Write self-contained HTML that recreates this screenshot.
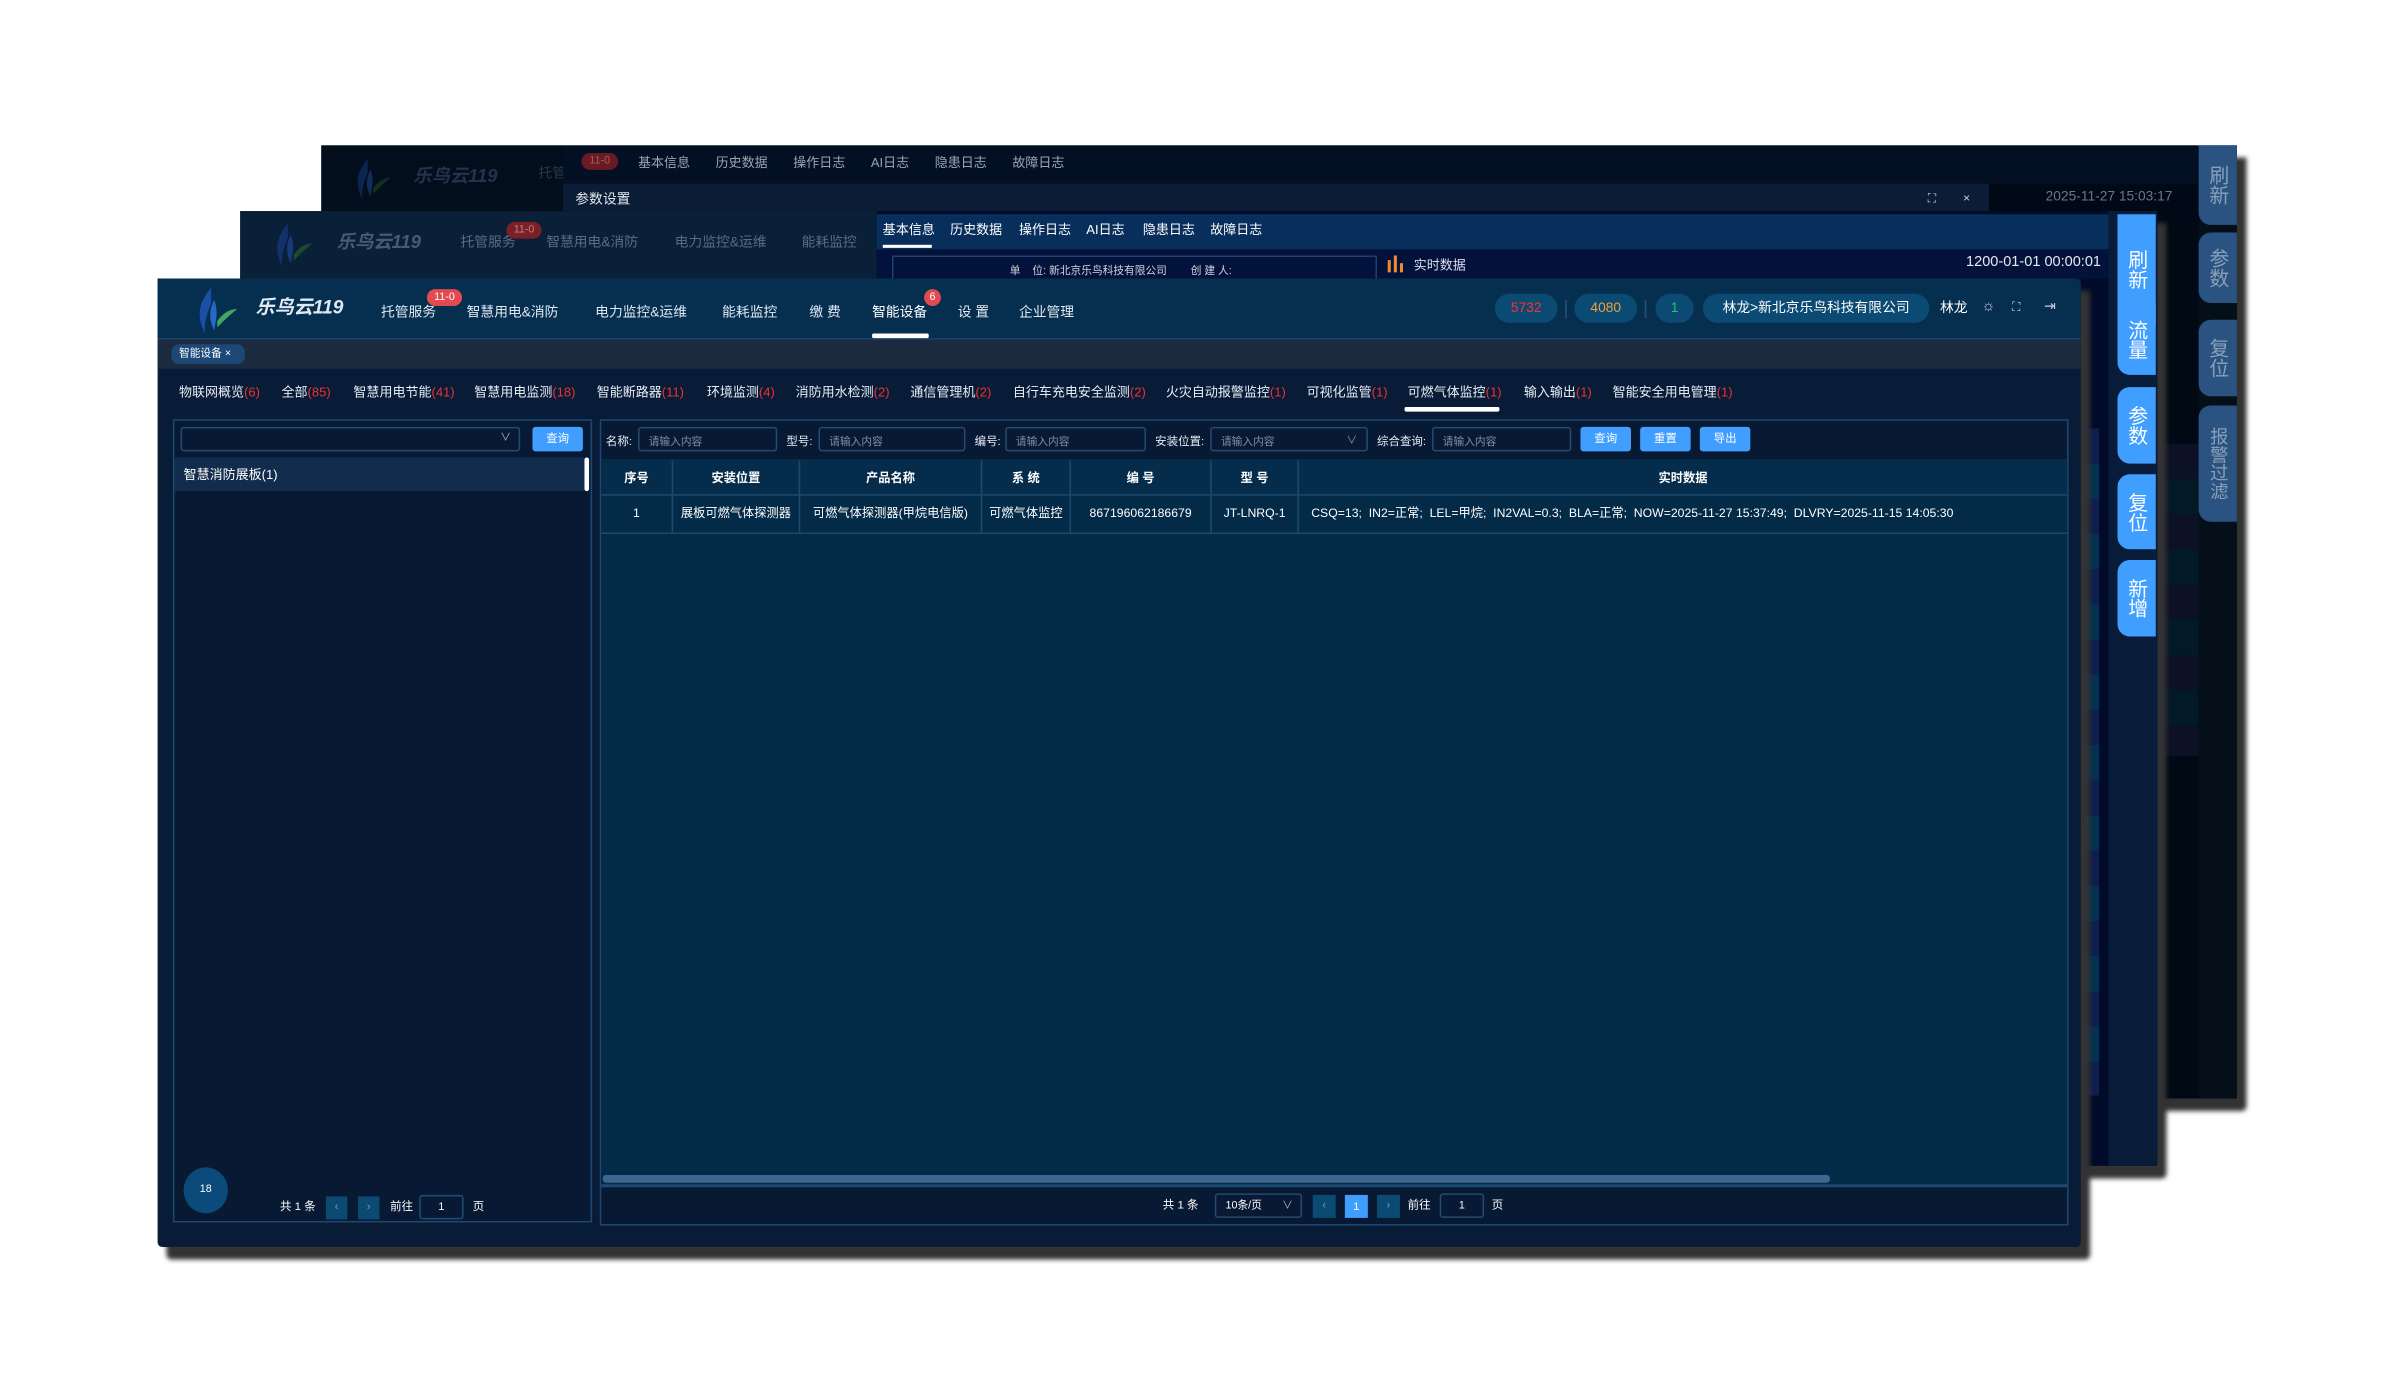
<!DOCTYPE html>
<html><head><meta charset="utf-8">
<style>
*{box-sizing:border-box;margin:0;padding:0}
html,body{width:2399px;height:1400px;background:#fff;overflow:hidden}
body{font-family:"Liberation Sans","Noto Sans CJK SC",sans-serif;color:#fff}
#s{position:absolute;left:0;top:0;width:1568px;height:915px;transform:scale(1.530);transform-origin:0 0}
.a{position:absolute}
.t{position:absolute;white-space:nowrap;line-height:1}
.win{position:absolute;box-shadow:6px 8px 3px #333;border-radius:0 0 3px 3px}
.cat{position:absolute;top:250px;font-size:8.5px;white-space:nowrap;color:#e8eef5}
.cat i{font-style:normal;color:#f03030}
.inp{position:absolute;height:16px;border:1px solid #244a70;border-radius:2px;background:#081a33;font-size:7px;color:#7e8fa3;padding:4px 0 0 6px;white-space:nowrap}
.btn{position:absolute;height:16px;background:#409eff;border-radius:2px;font-size:7.5px;color:#fff;text-align:center;line-height:16px}
.lbl{position:absolute;font-size:7.5px;color:#e6edf5;white-space:nowrap}
.th,.td{position:absolute;font-size:8px;text-align:center;white-space:nowrap}
.th{top:301px;height:23px;line-height:23px;font-weight:bold;border-right:1px solid #1d4a72}
.td{top:324px;height:24px;line-height:24px;border-right:1px solid #1d4a72}
.sb{position:absolute;width:25px;border-radius:8px 0 0 8px;font-size:13px;line-height:15px;text-align:center;writing-mode:vertical-rl;display:flex;align-items:center;justify-content:center}
.pill{position:absolute;top:192px;height:19px;border-radius:10px;background:#0a4a73;font-size:9px;line-height:19px;text-align:center}
.nav{position:absolute;top:197px;font-size:9px;color:#dfe8f2;white-space:nowrap}
</style></head><body><div id="s">

<!-- Window 3 (back) -->
<div class="win" style="left:210px;top:95px;width:1252px;height:623px;background:#000914"></div>
<div class="a" style="left:210px;top:95px;width:158px;height:45px;background:#020e1c"></div>
<svg class="a" style="left:228px;top:100px" width="30" height="34" viewBox="0 0 34 34"><path d="M14 2 C6 12 4 20 10 32 C9 24 12 18 14 12 Z" fill="#0c2450"/><path d="M16 10 C12 18 13 24 16 30 C17 24 19 18 16 10 Z" fill="#0f2c5c"/><path d="M18 24 C22 18 27 16 31 16 C26 20 22 24 18 28 Z" fill="#123020"/></svg>
<div class="t" style="left:270px;top:109px;font-size:12px;font-weight:bold;font-style:italic;color:#25334a">乐鸟云119</div>
<div class="t" style="left:352px;top:109px;font-size:9px;color:#2a3848">托管服务</div>
<div class="a" style="left:368px;top:95px;width:1068px;height:25px;background:#031024"></div>
<div class="a" style="left:380px;top:100px;width:24px;height:11px;border-radius:6px;background:#6a1a22;font-size:7px;color:#a06060;text-align:center;line-height:11px">11-0</div>
<div class="t" style="left:417px;top:102px;font-size:8.5px;color:#9aa5b3;word-spacing:6px">基本信息&nbsp; 历史数据&nbsp; 操作日志&nbsp; AI日志&nbsp; 隐患日志&nbsp; 故障日志</div>
<div class="a" style="left:368px;top:120px;width:932px;height:25px;background:#0a1c36"></div>
<div class="t" style="left:376px;top:126px;font-size:9px;color:#e4e9ef">参数设置</div>
<div class="t" style="left:1260px;top:126px;font-size:8px;color:#ccd">⛶</div>
<div class="t" style="left:1283px;top:126px;font-size:8px;color:#ccd">×</div>
<div class="a" style="left:1300px;top:120px;width:137px;height:25px;background:#000a16"></div>
<div class="t" style="left:1337px;top:124px;font-size:9px;color:#6d7785">2025-11-27 15:03:17</div>
<div class="a" style="left:1410px;top:290px;width:27px;height:204px;background:repeating-linear-gradient(#0c1126 0 23px,#021926 23px 46px)"></div>
<div class="a" style="left:1437px;top:95px;width:25px;height:623px;background:#040f1a"></div>
<div class="sb" style="left:1437px;top:95px;height:52px;background:#2b5382;color:#8aa0b8;border-radius:0 0 0 8px">刷新</div>
<div class="sb" style="left:1437px;top:152px;height:46px;background:#2b5382;color:#8aa0b8">参数</div>
<div class="sb" style="left:1437px;top:209px;height:50px;background:#2b5382;color:#8aa0b8">复位</div>
<div class="sb" style="left:1437px;top:265px;height:76px;background:#2b5382;color:#8aa0b8;font-size:12px;line-height:13px">报警过滤</div>

<!-- Window 2 -->
<div class="win" style="left:157px;top:138px;width:1253px;height:624px;background:#000b2a"></div>
<div class="a" style="left:157px;top:138px;width:416px;height:44px;background:#0a1f38"></div>
<svg class="a" style="left:175px;top:142px" width="32" height="36" viewBox="0 0 34 34"><path d="M14 2 C6 12 4 20 10 32 C9 24 12 18 14 12 Z" fill="#12306a"/><path d="M16 10 C12 18 13 24 16 30 C17 24 19 18 16 10 Z" fill="#163a78"/><path d="M18 24 C22 18 27 16 31 16 C26 20 22 24 18 28 Z" fill="#1c4a30"/></svg>
<div class="t" style="left:220px;top:152px;font-size:12px;font-weight:bold;font-style:italic;color:#4a5a70">乐鸟云119</div>
<div class="t" style="left:301px;top:154px;font-size:9px;color:#5b6b80">托管服务</div>
<div class="a" style="left:331px;top:145px;width:23px;height:11px;border-radius:6px;background:#7a2028;font-size:7px;color:#c08080;text-align:center;line-height:11px">11-0</div>
<div class="t" style="left:357px;top:154px;font-size:9px;color:#5b6b80">智慧用电&amp;消防</div>
<div class="t" style="left:441px;top:154px;font-size:9px;color:#5b6b80">电力监控&amp;运维</div>
<div class="t" style="left:524px;top:154px;font-size:9px;color:#5b6b80">能耗监控</div>
<div class="a" style="left:573px;top:140px;width:811px;height:23px;background:#082e5c"></div>
<div class="t" style="left:577px;top:146px;font-size:8.5px;color:#fff">基本信息</div>
<div class="a" style="left:577px;top:160px;width:32px;height:2px;background:#fff"></div>
<div class="t" style="left:621px;top:146px;font-size:8.5px;color:#fff">历史数据</div>
<div class="t" style="left:666px;top:146px;font-size:8.5px;color:#fff">操作日志</div>
<div class="t" style="left:710px;top:146px;font-size:8.5px;color:#fff">AI日志</div>
<div class="t" style="left:747px;top:146px;font-size:8.5px;color:#fff">隐患日志</div>
<div class="t" style="left:791px;top:146px;font-size:8.5px;color:#fff">故障日志</div>
<div class="a" style="left:573px;top:163px;width:811px;height:19px;background:#02123a"></div>
<div class="a" style="left:583px;top:167px;width:317px;height:15px;border:1px solid #1f3f70;border-bottom:none"></div>
<div class="t" style="left:660px;top:174px;font-size:7px;color:#cfd6e0">单 &nbsp;&nbsp; 位: 新北京乐鸟科技有限公司 &nbsp;&nbsp;&nbsp;&nbsp;&nbsp;&nbsp; 创 建 人:</div>
<div class="a" style="left:907px;top:170px;width:2px;height:8px;background:#f08a30"></div>
<div class="a" style="left:911px;top:167px;width:2px;height:11px;background:#f08a30"></div>
<div class="a" style="left:915px;top:172px;width:2px;height:6px;background:#f08a30"></div>
<div class="t" style="left:924px;top:169px;font-size:8.5px;color:#dde">实时数据</div>
<div class="t" style="left:1285px;top:167px;font-size:9.5px;color:#e6eaf0">1200-01-01 00:00:01</div>
<div class="a" style="left:1360px;top:280px;width:12px;height:436px;background:repeating-linear-gradient(#0f1e4e 0 23px,#023250 23px 46px)"></div>
<div class="t" style="left:1358px;top:535px;font-size:5px;color:#8899aa">80/</div>
<div class="a" style="left:1378px;top:138px;width:32px;height:624px;background:#081b38"></div>
<div class="sb" style="left:1384px;top:140px;height:72px;background:#409eff;color:#fff;border-radius:0 0 0 8px">刷新</div>
<div class="sb" style="left:1384px;top:198px;height:47px;background:#409eff;color:#fff">流量</div>
<div class="sb" style="left:1384px;top:253px;height:50px;background:#409eff;color:#fff">参数</div>
<div class="sb" style="left:1384px;top:310px;height:49px;background:#409eff;color:#fff">复位</div>
<div class="sb" style="left:1384px;top:366px;height:50px;background:#409eff;color:#fff">新增</div>

<!-- Front window -->
<div class="win" style="left:103px;top:182px;width:1257px;height:633px;background:#081b37"></div>
<div class="a" style="left:103px;top:182px;width:1257px;height:40px;background:#062f4f;border-bottom:1px solid #1a4a75;border-radius:4px 4px 0 0"></div>
<svg class="a" style="left:124px;top:186px" width="34" height="34" viewBox="0 0 34 34"><path d="M14 2 C6 12 4 20 10 32 C9 24 12 18 14 12 Z" fill="#1a4fa8"/><path d="M16 10 C12 18 13 24 16 30 C17 24 19 18 16 10 Z" fill="#2468c8"/><path d="M18 24 C22 18 27 16 31 16 C26 20 22 24 18 28 Z" fill="#3da860"/></svg>
<div class="t" style="left:167px;top:195px;font-size:12.5px;font-weight:bold;font-style:italic;color:#dfe8f4">乐鸟云119</div>
<div class="nav" style="left:249px">托管服务</div>
<div class="a" style="left:279px;top:189px;width:23px;height:11px;border-radius:6px;background:#e24a50;font-size:7px;text-align:center;line-height:11px">11-0</div>
<div class="nav" style="left:305px">智慧用电&amp;消防</div>
<div class="nav" style="left:389px">电力监控&amp;运维</div>
<div class="nav" style="left:472px">能耗监控</div>
<div class="nav" style="left:529px">缴 费</div>
<div class="nav" style="left:570px;color:#fff">智能设备</div>
<div class="a" style="left:604px;top:189px;width:11px;height:11px;border-radius:6px;background:#e24a50;font-size:7px;text-align:center;line-height:11px">6</div>
<div class="a" style="left:570px;top:218px;width:37px;height:3px;background:#fff;border-radius:1px"></div>
<div class="nav" style="left:626px">设 置</div>
<div class="nav" style="left:666px">企业管理</div>
<div class="pill" style="left:977px;width:41px;color:#ff3030">5732</div>
<div class="a" style="left:1023px;top:196px;width:1px;height:12px;background:#2a5070"></div>
<div class="pill" style="left:1029px;width:41px;color:#f0a040">4080</div>
<div class="a" style="left:1075px;top:196px;width:1px;height:12px;background:#2a5070"></div>
<div class="pill" style="left:1082px;width:25px;color:#20c080">1</div>
<div class="pill" style="left:1113px;width:148px;color:#fff">林龙&gt;新北京乐鸟科技有限公司</div>
<div class="t" style="left:1268px;top:197px;font-size:9px">林龙</div>
<div class="t" style="left:1295px;top:196px;font-size:10px;color:#ccd">☼</div>
<div class="t" style="left:1315px;top:197px;font-size:8px;color:#ccd">⛶</div>
<div class="t" style="left:1336px;top:196px;font-size:9px;color:#ccd">⇥</div>

<div class="a" style="left:103px;top:222px;width:1257px;height:19px;background:#1c2a40"></div>
<div class="a" style="left:112px;top:225px;width:48px;height:13px;background:#1c4877;border-radius:5px;font-size:7px;line-height:13px;padding-left:5px">智能设备 ×</div>

<div class="cat" style="left:117px">物联网概览<i>(6)</i></div>
<div class="cat" style="left:184px">全部<i>(85)</i></div>
<div class="cat" style="left:231px">智慧用电节能<i>(41)</i></div>
<div class="cat" style="left:310px">智慧用电监测<i>(18)</i></div>
<div class="cat" style="left:390px">智能断路器<i>(11)</i></div>
<div class="cat" style="left:462px">环境监测<i>(4)</i></div>
<div class="cat" style="left:520px">消防用水检测<i>(2)</i></div>
<div class="cat" style="left:595px">通信管理机<i>(2)</i></div>
<div class="cat" style="left:662px">自行车充电安全监测<i>(2)</i></div>
<div class="cat" style="left:762px">火灾自动报警监控<i>(1)</i></div>
<div class="cat" style="left:854px">可视化监管<i>(1)</i></div>
<div class="cat" style="left:920px">可燃气体监控<i>(1)</i></div>
<div class="a" style="left:918px;top:266px;width:62px;height:3px;background:#fff;border-radius:1px"></div>
<div class="cat" style="left:996px">输入输出<i>(1)</i></div>
<div class="cat" style="left:1054px">智能安全用电管理<i>(1)</i></div>

<!-- left panel -->
<div class="a" style="left:113px;top:274px;width:274px;height:525px;background:#081a33;border:1px solid #1d4870"></div>
<div class="inp" style="left:118px;top:279px;width:222px;height:16px"></div>
<div class="t" style="left:327px;top:283px;font-size:7px;color:#aab">∨</div>
<div class="btn" style="left:348px;top:279px;width:33px">查询</div>
<div class="a" style="left:114px;top:299px;width:268px;height:22px;background:#112c4c"></div>
<div class="t" style="left:120px;top:306px;font-size:8.5px">智慧消防展板(1)</div>
<div class="a" style="left:382px;top:299px;width:3px;height:22px;background:#fff;border-radius:2px"></div>
<div class="a" style="left:120px;top:763px;width:29px;height:30px;border-radius:50%;background:#0b4a7a;font-size:7px;text-align:center;line-height:30px">18</div>
<div class="t" style="left:183px;top:785px;font-size:7.5px">共 1 条</div>
<div class="a" style="left:213px;top:782px;width:14px;height:15px;background:#0b4a73;font-size:7px;color:#7aa;text-align:center;line-height:15px">‹</div>
<div class="a" style="left:234px;top:782px;width:14px;height:15px;background:#0b4a73;font-size:7px;color:#7aa;text-align:center;line-height:15px">›</div>
<div class="t" style="left:255px;top:785px;font-size:7.5px">前往</div>
<div class="a" style="left:274px;top:781px;width:29px;height:16px;border:1px solid #244a70;border-radius:2px;font-size:7px;text-align:center;line-height:15px">1</div>
<div class="t" style="left:309px;top:785px;font-size:7.5px">页</div>

<!-- right panel -->
<div class="a" style="left:392px;top:274px;width:960px;height:527px;background:#081a33;border:1px solid #1d4870"></div>
<div class="lbl" style="left:396px;top:283px">名称:</div>
<div class="inp" style="left:417px;top:279px;width:91px">请输入内容</div>
<div class="lbl" style="left:514px;top:283px">型号:</div>
<div class="inp" style="left:535px;top:279px;width:96px">请输入内容</div>
<div class="lbl" style="left:637px;top:283px">编号:</div>
<div class="inp" style="left:657px;top:279px;width:92px">请输入内容</div>
<div class="lbl" style="left:755px;top:283px">安装位置:</div>
<div class="inp" style="left:791px;top:279px;width:103px">请输入内容<span style="position:absolute;right:6px;top:3px">∨</span></div>
<div class="lbl" style="left:900px;top:283px">综合查询:</div>
<div class="inp" style="left:936px;top:279px;width:91px">请输入内容</div>
<div class="btn" style="left:1033px;top:279px;width:33px">查询</div>
<div class="btn" style="left:1072px;top:279px;width:33px">重置</div>
<div class="btn" style="left:1111px;top:279px;width:33px">导出</div>

<div class="a" style="left:393px;top:300px;width:958px;height:474px;background:#032a47;border-top:1px solid #1d4a72"></div>
<div class="a" style="left:393px;top:300px;width:958px;height:24px;background:#052c4b;border-bottom:1px solid #1d4a72"></div>
<div class="a" style="left:393px;top:348px;width:958px;height:1px;background:#1d4a72"></div>
<div class="th" style="left:393px;width:47px">序号</div>
<div class="th" style="left:440px;width:83px">安装位置</div>
<div class="th" style="left:523px;width:119px">产品名称</div>
<div class="th" style="left:642px;width:58px">系 统</div>
<div class="th" style="left:700px;width:92px">编 号</div>
<div class="th" style="left:792px;width:57px">型 号</div>
<div class="th" style="left:849px;width:502px;border:none">实时数据</div>
<div class="td" style="left:393px;width:47px">1</div>
<div class="td" style="left:440px;width:83px">展板可燃气体探测器</div>
<div class="td" style="left:523px;width:119px">可燃气体探测器(甲烷电信版)</div>
<div class="td" style="left:642px;width:58px">可燃气体监控</div>
<div class="td" style="left:700px;width:92px">867196062186679</div>
<div class="td" style="left:792px;width:57px">JT-LNRQ-1</div>
<div class="td" style="left:849px;width:502px;border:none;text-align:left;padding-left:8px">CSQ=13;&nbsp; IN2=正常;&nbsp; LEL=甲烷;&nbsp; IN2VAL=0.3;&nbsp; BLA=正常;&nbsp; NOW=2025-11-27 15:37:49;&nbsp; DLVRY=2025-11-15 14:05:30</div>
<div class="a" style="left:394px;top:768px;width:802px;height:5px;background:#3d6790;border-radius:2px"></div>
<div class="a" style="left:393px;top:774px;width:958px;height:2px;background:#1d4a72"></div>
<div class="t" style="left:760px;top:784px;font-size:7.5px">共 1 条</div>
<div class="a" style="left:794px;top:780px;width:57px;height:16px;border:1px solid #244a70;border-radius:2px;font-size:7px;line-height:15px;padding-left:6px">10条/页 <span style="position:absolute;right:5px;color:#aab">∨</span></div>
<div class="a" style="left:858px;top:781px;width:15px;height:15px;background:#0b4a73;font-size:7px;color:#7aa;text-align:center;line-height:15px">‹</div>
<div class="a" style="left:879px;top:781px;width:15px;height:15px;background:#409eff;font-size:7.5px;text-align:center;line-height:15px">1</div>
<div class="a" style="left:900px;top:781px;width:15px;height:15px;background:#0b4a73;font-size:7px;color:#7aa;text-align:center;line-height:15px">›</div>
<div class="t" style="left:920px;top:784px;font-size:7.5px">前往</div>
<div class="a" style="left:941px;top:780px;width:29px;height:16px;border:1px solid #244a70;border-radius:2px;font-size:7px;text-align:center;line-height:15px">1</div>
<div class="t" style="left:975px;top:784px;font-size:7.5px">页</div>

</div></body></html>
